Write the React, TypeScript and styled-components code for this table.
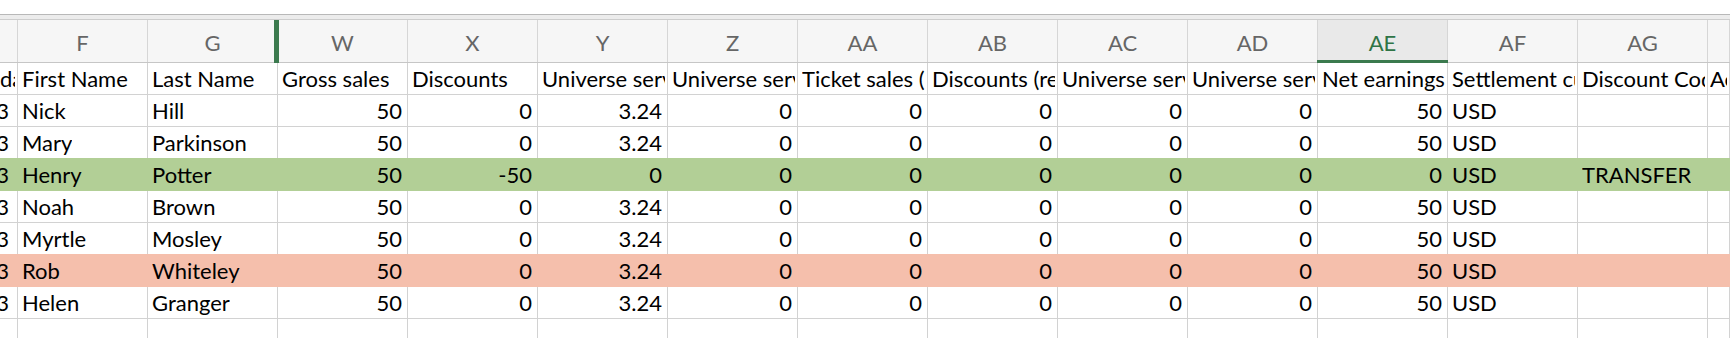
import styled, { createGlobalStyle } from 'styled-components';

const GlobalStyle = createGlobalStyle`
  html, body {
    margin: 0;
    padding: 0;
    background: #ffffff;
  }
  body {
    font-family: Lato, "Open Sans", sans-serif;
  }
`;

const GRID = '18px repeat(13, 130px) 1fr';

type Align = 'left' | 'right';

const letters = ['', 'F', 'G', 'W', 'X', 'Y', 'Z', 'AA', 'AB', 'AC', 'AD', 'AE', 'AF', 'AG', ''];
const aligns: Align[] = ['right', 'left', 'left', 'right', 'right', 'right', 'right', 'right', 'right', 'right', 'right', 'right', 'left', 'left', 'left'];
const titles = [
    'date',
    'First Name',
    'Last Name',
    'Gross sales',
    'Discounts',
    'Universe service fee',
    'Universe service fee (refund)',
    'Ticket sales (refund)',
    'Discounts (refund)',
    'Universe service fee (refund)',
    'Universe service fee',
    'Net earnings',
    'Settlement currency',
    'Discount Code',
    'Account',
];

interface Sale {
    first: string;
    last: string;
    discount: string;
    fee: string;
    net: string;
    code: string;
    fill?: string;
}

const sales: Sale[] = [
    { first: 'Nick', last: 'Hill', discount: '0', fee: '3.24', net: '50', code: '' },
    { first: 'Mary', last: 'Parkinson', discount: '0', fee: '3.24', net: '50', code: '' },
    { first: 'Henry', last: 'Potter', discount: '-50', fee: '0', net: '0', code: 'TRANSFER', fill: 'rgb(178, 207, 150)' },
    { first: 'Noah', last: 'Brown', discount: '0', fee: '3.24', net: '50', code: '' },
    { first: 'Myrtle', last: 'Mosley', discount: '0', fee: '3.24', net: '50', code: '' },
    { first: 'Rob', last: 'Whiteley', discount: '0', fee: '3.24', net: '50', code: '', fill: 'rgb(245, 191, 172)' },
    { first: 'Helen', last: 'Granger', discount: '0', fee: '3.24', net: '50', code: '' },
];

const Sheet = styled.div`
    width: 1730px;
    height: 338px;
    overflow: hidden;
    padding-top: 14px;
    box-sizing: border-box;
    background: #ffffff;
`;

const Divider = styled.div`
    height: 4px;
    border-top: 1px solid #b8b8b8;
    border-bottom: 1px solid #cdcdcd;
    background: #ececec;
`;

const HeaderRow = styled.div`
    display: grid;
    grid-template-columns: ${GRID};
    height: 43px;
    box-sizing: border-box;
    border-bottom: 1px solid #c6c6c6;
    background: #f6f6f6;
`;

const HeaderCell = styled.div<{ $selected?: boolean; $hiddenBefore?: boolean }>`
    position: relative;
    display: flex;
    align-items: center;
    justify-content: center;
    border-right: 1px solid #d6d6d6;
    font-size: 22px;
    padding-top: 2px;
    box-sizing: border-box;
    color: ${({ $selected }) => ($selected ? '#2f7446' : '#666666')};
    background: ${({ $selected }) => ($selected ? '#e9e9e9' : 'transparent')};

    ${({ $hiddenBefore }) => $hiddenBefore && `
        &::before {
            content: '';
            position: absolute;
            left: -4px;
            top: 0;
            bottom: -1px;
            width: 5px;
            background: #3b7a4e;
        }
    `}

    ${({ $selected }) => $selected && `
        &::after {
            content: '';
            position: absolute;
            left: -1px;
            right: -1px;
            bottom: -1px;
            height: 3px;
            background: #3b7a4e;
        }
    `}
`;

const Row = styled.div<{ $fill?: string }>`
    display: grid;
    grid-template-columns: ${GRID};
    height: 32px;
    box-sizing: border-box;
    border-bottom: 1px solid ${({ $fill }) => $fill ?? '#d2d2d2'};
    background: ${({ $fill }) => $fill ?? 'transparent'};
    ${({ $fill }) => $fill && `
        position: relative;
        z-index: 1;
        box-shadow: 0 -1px 0 ${$fill};
    `}
`;

const Cell = styled.div<{ $align: Align; $fill?: boolean; $edge?: 'start' | 'end' }>`
    display: flex;
    align-items: flex-end;
    justify-content: ${({ $align }) => ($align === 'right' ? 'flex-end' : 'flex-start')};
    min-width: 0;
    overflow: hidden;
    box-sizing: border-box;
    padding-bottom: 2px;
    padding-right: ${({ $align, $edge }) => ($align === 'right' ? ($edge === 'start' ? '8px' : '5px') : '2px')};
    padding-left: ${({ $align, $edge }) => ($align === 'right' ? '0' : $edge === 'start' ? '0' : $edge === 'end' ? '2px' : '4px')};
    border-right: 1px solid ${({ $fill }) => ($fill ? 'transparent' : '#d2d2d2')};
    font-size: 22px;
    line-height: 1.2;
    color: #000000;
    white-space: nowrap;
`;

const Text = styled.span<{ $align: Align }>`
    display: block;
    overflow: hidden;
    min-width: 0;
    flex: ${({ $align }) => ($align === 'right' ? '0 0 auto' : '0 1 auto')};
`;

function rowValues(sale: Sale) {
    return ['3', sale.first, sale.last, '50', sale.discount, sale.fee, '0', '0', '0', '0', '0', sale.net, 'USD', sale.code, ''];
}

function edgeOf(i: number, count: number) {
    if (i === 0) return 'start' as const;
    if (i === count - 1) return 'end' as const;
    return undefined;
}

export default function App() {
    return (
        <>
            <GlobalStyle />
            <Sheet>
                <Divider />
                <HeaderRow>
                    {letters.map((letter, i) => (
                        <HeaderCell key={i} $selected={letter === 'AE'} $hiddenBefore={letter === 'W'}>
                            {letter}
                        </HeaderCell>
                    ))}
                </HeaderRow>
                <Row>
                    {titles.map((title, i) => (
                        <Cell key={i} $align="left" $edge={edgeOf(i, titles.length)}>
                            <Text $align="left">{title}</Text>
                        </Cell>
                    ))}
                </Row>
                {sales.map((sale) => (
                    <Row key={sale.first} $fill={sale.fill}>
                        {rowValues(sale).map((value, i, all) => (
                            <Cell key={i} $align={aligns[i]} $fill={!!sale.fill} $edge={edgeOf(i, all.length)}>
                                <Text $align={aligns[i]}>{value}</Text>
                            </Cell>
                        ))}
                    </Row>
                ))}
                <Row>
                    {letters.map((_, i) => (
                        <Cell key={i} $align="left" />
                    ))}
                </Row>
            </Sheet>
        </>
    );
}
